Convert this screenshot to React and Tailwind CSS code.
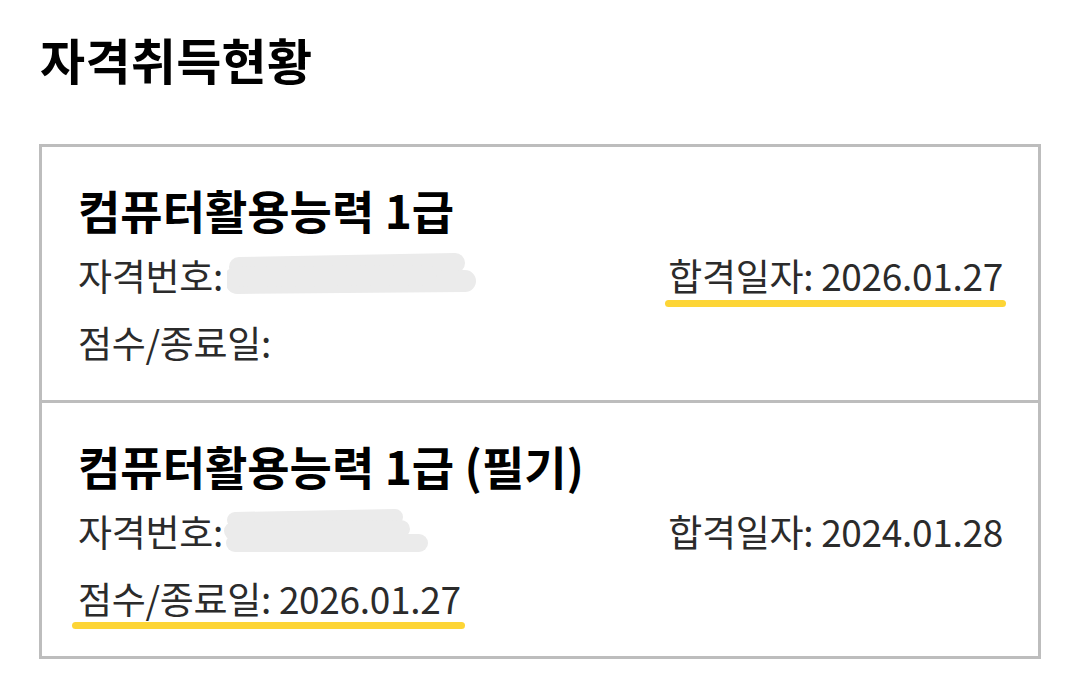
import React from "react";

const font = { fontFamily: '"Noto Sans CJK KR", "Noto Sans", sans-serif' };

function Blob({ variant }) {
  if (variant === 1) {
    return (
      <svg width="250" height="46" viewBox="0 0 250 46" className="block">
        <path d="M12 14 L228 10" stroke="#ebebeb" strokeWidth="20" strokeLinecap="round" fill="none" />
        <path d="M10 30 L238 28" stroke="#ebebeb" strokeWidth="22" strokeLinecap="round" fill="none" />
        <path d="M8 24 L200 22" stroke="#ebebeb" strokeWidth="20" strokeLinecap="round" fill="none" />
      </svg>
    );
  }
  return (
    <svg width="210" height="46" viewBox="0 0 210 46" className="block">
      <path d="M12 11 L172 8" stroke="#ebebeb" strokeWidth="16" strokeLinecap="round" fill="none" />
      <path d="M10 22 L178 20" stroke="#ebebeb" strokeWidth="18" strokeLinecap="round" fill="none" />
      <path d="M12 34 L196 34" stroke="#ebebeb" strokeWidth="18" strokeLinecap="round" fill="none" />
    </svg>
  );
}

function Marked({ children, extraLeft = 3, extraRight = 3, bottom = 2 }) {
  return (
    <span className="relative inline-block">
      {children}
      <span
        className="absolute h-[7px] rounded-full bg-[#fdd536]"
        style={{ left: -extraLeft, right: -extraRight, bottom }}
      />
    </span>
  );
}

export default function App() {
  return (
    <div className="w-[1080px] h-[694px] bg-white pt-[29px] pl-[39px]" style={font}>
      <h1 className="text-[49px] leading-[60px] font-bold text-black pl-[1px] mb-[55px] tracking-[0.3px]">
        자격취득현황
      </h1>
      <div className="w-[1002px] border-[3px] border-[#bdbdbd]">
        {/* Card 1 */}
        <div className="pl-[36px] pr-[35px] pt-[29px] pb-[24px]">
          <div className="text-[46px] leading-[66px] font-bold text-black">
            컴퓨터활용능력 1급
          </div>
          <div className="flex items-center justify-between text-[37px] leading-[67px] text-[#2b2b2b] tracking-[-0.3px]">
            <div className="flex items-center">
              <span>자격번호:</span>
              <span className="ml-[4px]">
                <Blob variant={1} />
              </span>
            </div>
            <Marked extraLeft={3} extraRight={3} bottom={2}>
              <span>합격일자: 2026.01.27</span>
            </Marked>
          </div>
          <div className="text-[37px] leading-[67px] text-[#2b2b2b] tracking-[-0.3px]">점수/종료일:</div>
        </div>
        <div className="h-[3px] bg-[#bdbdbd]" />
        {/* Card 2 */}
        <div className="pl-[36px] pr-[35px] pt-[29px] pb-[24px]">
          <div className="text-[46px] leading-[66px] font-bold text-black">
            컴퓨터활용능력 1급 (필기)
          </div>
          <div className="flex items-center justify-between text-[37px] leading-[67px] text-[#2b2b2b] tracking-[-0.3px]">
            <div className="flex items-center">
              <span>자격번호:</span>
              <span className="ml-[0px]">
                <Blob variant={2} />
              </span>
            </div>
            <span>합격일자: 2024.01.28</span>
          </div>
          <div className="text-[37px] leading-[67px] text-[#2b2b2b] tracking-[-0.3px]">
            <Marked extraLeft={6} extraRight={4} bottom={3}>
              <span>점수/종료일: 2026.01.27</span>
            </Marked>
          </div>
        </div>
      </div>
    </div>
  );
}
